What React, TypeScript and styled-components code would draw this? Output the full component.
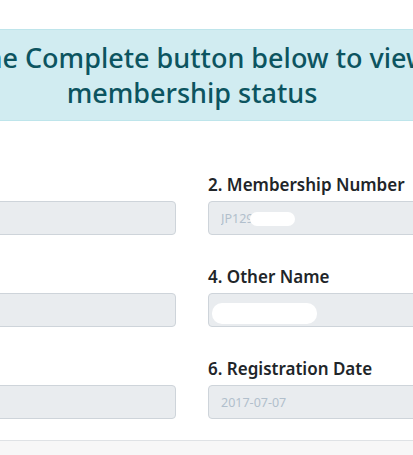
import React from 'react';
import styled, {createGlobalStyle} from "styled-components";

const GlobalStyle = createGlobalStyle`
  html, body {
    margin: 0;
    padding: 0;
    background: #fff;
    overflow: hidden;
  }
  body {
    font-family: "Noto Sans", "Open Sans", sans-serif;
    color: #212529;
  }
`;

type Field = { label: string; value: string; redact?: { left: number; width: number; top: number; height: number } };

const fields: Field[] = [
    {label: "1. Name", value: ""},
    {label: "2. Membership Number", value: "JP129", redact: {left: 42, width: 45, top: 11, height: 14}},
    {label: "3. Surname", value: ""},
    {label: "4. Other Name", value: "", redact: {left: 4, width: 105, top: 10, height: 21}},
    {label: "5. Status", value: ""},
    {label: "6. Registration Date", value: "2017-07-07"},
];

const App = () => {
    return (
        <>
            <GlobalStyle/>
            <Page>
                <Alert>
                    <AlertLine $offset={18}>Click the Complete button below to view your</AlertLine>
                    <AlertLine>membership status</AlertLine>
                </Alert>
                <Form>
                    {fields.map((f) => (
                        <Group key={f.label}>
                            <Label>{f.label}</Label>
                            <InputBox>
                                <Input readOnly value={f.value}/>
                                {f.redact && (
                                    // white blot painted over the personal data in the original
                                    <Blot style={{
                                        left: f.redact.left,
                                        width: f.redact.width,
                                        top: f.redact.top,
                                        height: f.redact.height
                                    }}/>
                                )}
                            </InputBox>
                        </Group>
                    ))}
                </Form>
                <Footer/>
            </Page>
        </>
    );
};

const Page = styled.div`
  width: 720px;
  margin-left: -168px;
  padding-top: 29px;
`;

const Alert = styled.div`
  background-color: #d1ecf1;
  border: 1px solid #bee5eb;
  color: #0c5460;
  border-radius: 4px;
  padding: 10px 20px;
  text-align: center;
  font-size: 27px;
  font-weight: 500;
  line-height: 35px;
  white-space: nowrap;
`;

const AlertLine = styled.div<{ $offset?: number }>`
  padding-left: ${props => props.$offset || 0}px;
`;

const Form = styled.div`
  display: grid;
  grid-template-columns: 1fr 1fr;
  column-gap: 32px;
  row-gap: 28px;
  padding: 50px 0 21px;
`;

const Group = styled.div`
  display: flex;
  flex-direction: column;
  gap: 3px;
`;

const Label = styled.label`
  font-size: 17px;
  font-weight: 600;
  line-height: 27px;
  color: #212529;
`;

const InputBox = styled.div`
  position: relative;
`;

const Input = styled.input`
  display: block;
  box-sizing: border-box;
  width: 100%;
  height: 34px;
  padding: 0 12px;
  border: 1px solid #ced4da;
  border-radius: 4px;
  background-color: #e9ecef;
  color: #b1bfcc;
  font-family: "Noto Sans", "Open Sans", sans-serif;
  font-size: 12.5px;
  outline: none;
`;

const Blot = styled.div`
  position: absolute;
  background: #fff;
  border-radius: 10px;
`;

const Footer = styled.div`
  height: 40px;
  border-top: 1px solid #dfe2e5;
  background-color: #f7f7f7;
`;

export default App;
